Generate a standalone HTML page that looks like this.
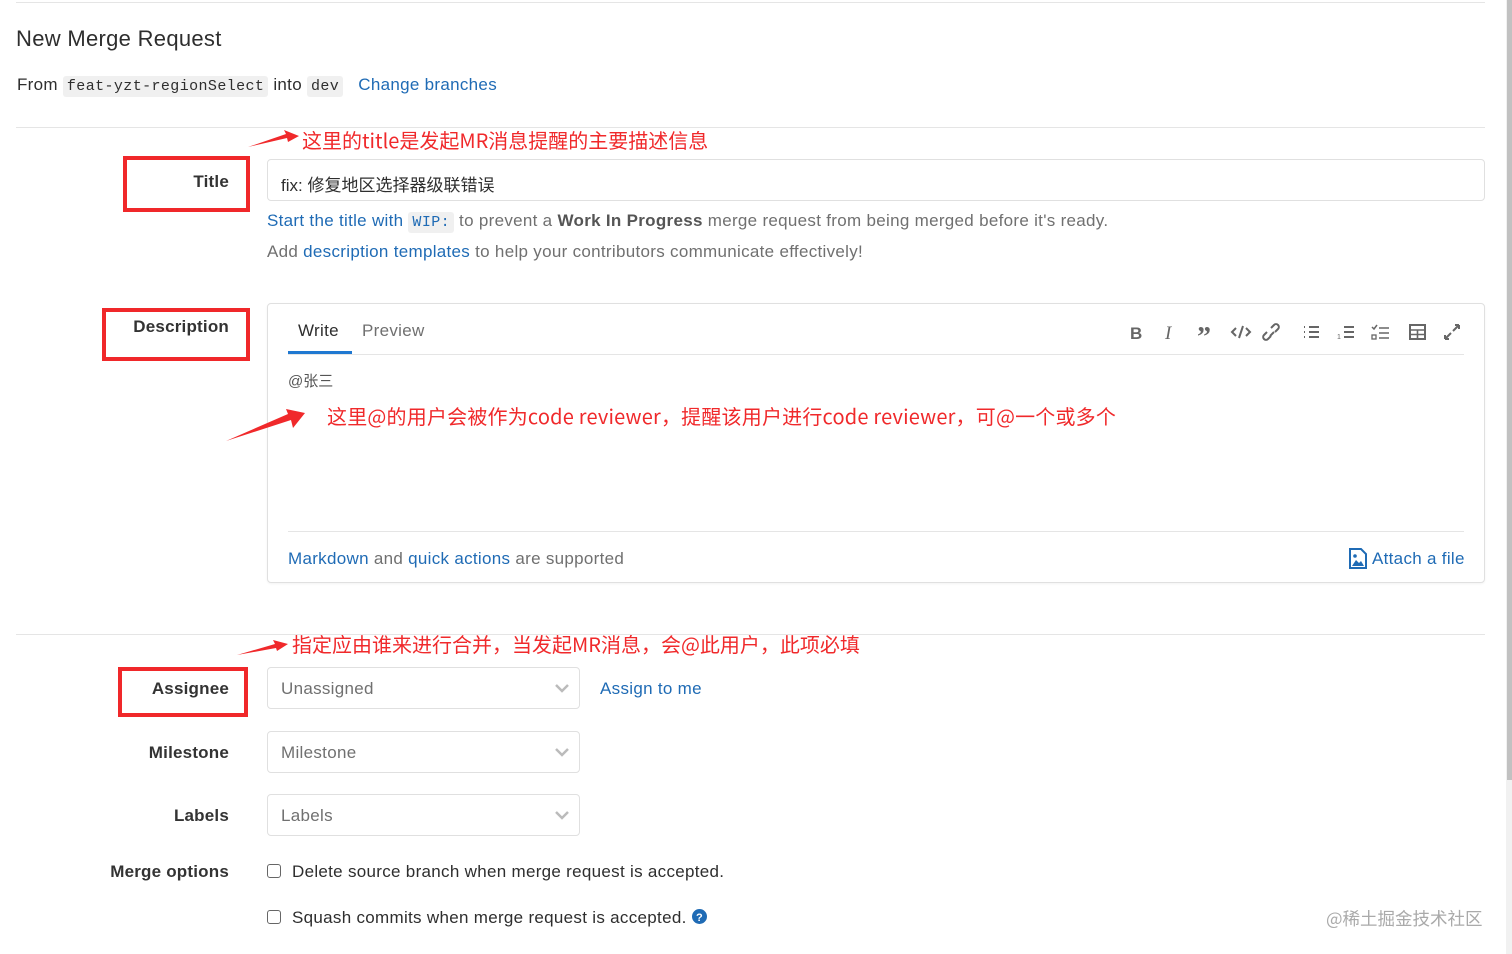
<!DOCTYPE html>
<html><head><meta charset="utf-8"><style>
*{margin:0;padding:0;box-sizing:border-box}
body{width:1512px;height:954px;overflow:hidden;background:#fff;font-family:"Liberation Sans","Noto Sans CJK SC",sans-serif;color:#2e2e2e;position:relative}
.a{position:absolute;white-space:nowrap}
.t{letter-spacing:0.3px}
.hr{position:absolute;height:1px;background:#e5e5e5}
.lbl{position:absolute;right:1283px;font-size:17px;font-weight:bold;color:#333;text-align:right;letter-spacing:0.2px}
.link{color:#1f6bb5}
.gray{color:#707070}
code{font-family:"Liberation Mono",monospace;background:#f0f0f0;border-radius:3px;padding:2px 4px;font-size:15px;color:#2e2e2e;letter-spacing:0.4px}
.red{color:#f0292b;font-size:20px;font-family:"Noto Sans CJK SC",sans-serif}
.rbox{position:absolute;border:4px solid #f0282a}
.inp{position:absolute;border:1px solid #e0e0e0;border-radius:4px;background:#fff}
.dd{position:absolute;left:267px;width:313px;height:42px;border:1px solid #e0e0e0;border-radius:4px;font-size:17px;color:#707070;padding:11px 13px;letter-spacing:0.3px}
.dd svg{position:absolute;right:10px;top:15px}
.cb{position:absolute;left:267px;width:14px;height:14px;border:1.5px solid #666;border-radius:3px}
</style></head><body>
<div class="hr" style="left:16px;top:2px;width:1469px"></div>
<div class="a t" style="left:16px;top:26px;font-size:22px;color:#2e2e2e">New Merge Request</div>
<div class="a t" style="left:17px;top:75px;font-size:17px">From <code>feat-yzt-regionSelect</code> into <code>dev</code> &nbsp;&nbsp;<span class="link">Change branches</span></div>
<div class="hr" style="left:16px;top:127px;width:1469px"></div>

<div class="rbox" style="left:123px;top:156px;width:127px;height:56px"></div>
<div class="lbl" style="top:172px">Title</div>
<div class="inp" style="left:267px;top:159px;width:1218px;height:42px"></div>
<div class="a" style="left:281px;top:171px;font-size:17px">fix: 修复地区选择器级联错误</div>
<div class="a gray t" style="left:267px;top:211px;font-size:17px"><span class="link">Start the title with</span> <code style="color:#1f6bb5">WIP:</code> to prevent a <b style="color:#555">Work In Progress</b> merge request from being merged before it's ready.</div>
<div class="a gray t" style="left:267px;top:242px;font-size:17px">Add <span class="link">description templates</span> to help your contributors communicate effectively!</div>

<div class="rbox" style="left:102px;top:308px;width:148px;height:53px"></div>
<div class="lbl" style="top:317px">Description</div>
<div class="inp" style="left:267px;top:303px;width:1218px;height:280px;box-shadow:0 1px 2px rgba(0,0,0,.05)"></div>
<div class="a t" style="left:298px;top:321px;font-size:17px;color:#2e2e2e">Write</div>
<div class="a gray t" style="left:362px;top:321px;font-size:17px">Preview</div>
<div class="a" style="left:288px;top:351px;width:64px;height:3px;background:#1f78d1"></div>
<div class="hr" style="left:288px;top:354px;width:1176px"></div>
<svg class="a" style="left:1125px;top:320px" width="345" height="24" viewBox="0 0 345 24" fill="none" stroke="#666" stroke-width="2">
<text x="5" y="19" font-family="Liberation Sans" font-weight="bold" font-size="17" fill="#666" stroke="none">B</text>
<text x="40" y="19" font-family="Liberation Serif" font-style="italic" font-size="19" fill="#666" stroke="none">I</text>
<text x="72" y="26" font-family="Liberation Serif" font-weight="bold" font-size="28" fill="#666" stroke="none">”</text>
<path d="M111 8l-4 4 4 4M121 8l4 4-4 4M118 6l-4 12"/>
<path d="M146 14l-3 3a2.5 2.5 0 01-4-4l3-3M150 10l3-3a2.5 2.5 0 00-4-4l-3 3M145 14l4-4" transform="translate(0,2)"/>
<path d="M184 7h10M184 12h10M184 17h10M179 7h1M179 12h1M179 17h1"/>
<path d="M219 7h10M219 12h10M219 17h10" /><text x="212" y="19" font-size="7" fill="#666" stroke="none">1</text>
<path d="M254 8h10M254 13h10M254 18h10M247 7l2 2 3-4" stroke-width="1.5"/><rect x="247" y="15" width="4" height="4" stroke-width="1.3"/>
<rect x="285" y="5" width="15" height="14" stroke-width="2"/><path d="M285 10h15M285 14.5h15M292.5 10v9" stroke-width="1.6"/>
<path d="M320 19l6-6M320 19v-4M320 19h4M334 5l-6 6M334 5v4M334 5h-4" stroke-width="2"/>
</svg>
<div class="a" style="left:288px;top:370px;font-size:15px;color:#555">@张三</div>
<div class="hr" style="left:288px;top:531px;width:1176px"></div>
<div class="a gray t" style="left:288px;top:549px;font-size:17px"><span class="link">Markdown</span> and <span class="link">quick actions</span> are supported</div>
<svg class="a" style="left:1349px;top:548px" width="18" height="21" viewBox="0 0 18 21"><path d="M1 1h11l5 5v14H1z" fill="none" stroke="#1f6bb5" stroke-width="2"/><path d="M3 18l4-6 3 3 2-2 3 5z" fill="#1f6bb5"/><circle cx="6" cy="8" r="1.8" fill="#1f6bb5"/></svg>
<div class="a link t" style="left:1372px;top:549px;font-size:17px">Attach a file</div>

<div class="hr" style="left:16px;top:634px;width:1469px"></div>
<div class="rbox" style="left:118px;top:667px;width:130px;height:50px"></div>
<div class="lbl" style="top:679px">Assignee</div>
<div class="dd" style="top:667px">Unassigned<svg width="14" height="10" viewBox="0 0 14 10"><path d="M1 2l6 6 6-6" fill="none" stroke="#bbb" stroke-width="2.5"/></svg></div>
<div class="a link t" style="left:600px;top:679px;font-size:17px">Assign to me</div>
<div class="lbl" style="top:743px">Milestone</div>
<div class="dd" style="top:731px">Milestone<svg width="14" height="10" viewBox="0 0 14 10"><path d="M1 2l6 6 6-6" fill="none" stroke="#bbb" stroke-width="2.5"/></svg></div>
<div class="lbl" style="top:806px">Labels</div>
<div class="dd" style="top:794px">Labels<svg width="14" height="10" viewBox="0 0 14 10"><path d="M1 2l6 6 6-6" fill="none" stroke="#bbb" stroke-width="2.5"/></svg></div>
<div class="lbl" style="top:862px">Merge options</div>
<div class="cb" style="top:864px"></div>
<div class="a t" style="left:292px;top:862px;font-size:17px">Delete source branch when merge request is accepted.</div>
<div class="cb" style="top:910px"></div>
<div class="a t" style="left:292px;top:908px;font-size:17px">Squash commits when merge request is accepted. <svg width="15" height="15" viewBox="0 0 15 15" style="vertical-align:-1px"><circle cx="7.5" cy="7.5" r="7.5" fill="#1f6bb5"/><text x="7.5" y="12" text-anchor="middle" font-size="11" font-weight="bold" fill="#fff" font-family="Liberation Sans">?</text></svg></div>
<div class="a" style="left:1326px;top:906px;font-size:17.5px;color:#aaa;font-family:'Noto Sans CJK SC',sans-serif">@稀土掘金技术社区</div>

<div class="a red" style="left:302px;top:125px">这里的title是发起MR消息提醒的主要描述信息</div>
<div class="a red" style="left:327px;top:401px;letter-spacing:0.2px">这里@的用户会被作为code reviewer，提醒该用户进行code reviewer，可@一个或多个</div>
<div class="a red" style="left:292px;top:629px">指定应由谁来进行合并，当发起MR消息，会@此用户，此项必填</div>
<svg class="a" style="left:0;top:0" width="1512" height="954">
<path d="M248 147L286 134L284 130L299 136L288 142L287 138Z" fill="#f0292b"/>
<path d="M226 441L288 414L286 409L305 413L293 428L291 420Z" fill="#f0292b"/>
<path d="M237 655L275 644L273 640L288 644L277 651L276 648Z" fill="#f0292b"/>
</svg>
<div class="a" style="left:1506px;top:0;width:6px;height:954px;background:#f1f1f1"></div>
<div class="a" style="left:1507px;top:0;width:5px;height:780px;background:#c1c1c1"></div>
</body></html>
